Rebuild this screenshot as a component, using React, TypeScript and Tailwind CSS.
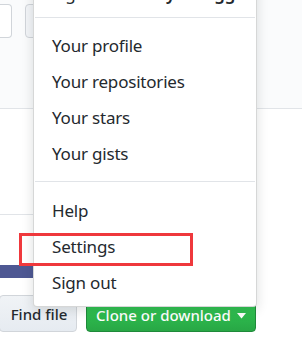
import React from "react";

const font = { fontFamily: '"Noto Sans", "Open Sans", sans-serif' };

function Item({ label }: { label: string }) {
  return (
    <div className="h-[36px] leading-[36px] pl-[18px] text-[17px] tracking-[-0.2px] text-[#24292e]">{label}</div>
  );
}

export default function App() {
  return (
    <div className="relative w-[302px] h-[337px] overflow-hidden bg-white" style={font}>
      {/* page background */}
      <div className="flex flex-col h-full">
        <div className="h-[109px] shrink-0 bg-[#fafbfc] border-b border-[#e1e4e8] pt-[4px] flex items-start">
          <div className="w-[12px] h-[34px] bg-white border border-l-0 border-[#d1d5da] rounded-r-[4px]" />
          <div className="ml-[13px] w-[60px] h-[34px] bg-[#f3f5f8] border border-[#d1d5da] rounded-[4px]" />
        </div>
        <div className="h-[106px] shrink-0 border-b border-[#e1e4e8] w-[100px]" />
        <div className="h-[50px] shrink-0" />
        <div className="h-[13px] shrink-0 w-[100px] bg-[#4e5893]" />
        <div className="h-[17px] shrink-0" />
        <div className="flex items-start gap-[9px]">
          <div className="w-[78px] h-[37px] ml-[-1px] pt-[2px] flex items-center justify-center rounded-[4px] border border-[#d1d5da] bg-gradient-to-b from-[#f0f3f6] to-[#e6ebf1] text-[15px] font-medium text-[#24292e]">
            <span className="pl-[2px]">Find file</span>
          </div>
          <div className="w-[170px] h-[37px] pt-[3px] flex items-center justify-center gap-[6px] rounded-[4px] border border-[#1f8a3a] bg-gradient-to-b from-[#34d058] to-[#28a745] text-[15px] font-medium text-white">
            <span>Clone or download</span>
            <svg width="9" height="6" viewBox="0 0 9 6" className="mt-[1px]">
              <path d="M0 0 L9 0 L4.5 5.5 Z" fill="white" />
            </svg>
          </div>
        </div>
      </div>

      {/* dropdown menu */}
      <div className="absolute left-[33px] top-[-25px] w-[224px] bg-white border border-[rgba(27,31,35,0.18)] rounded-b-[4px] shadow-[0_3px_12px_rgba(27,31,35,0.15)]">
        <div className="h-[41px] leading-[36px] pl-[18px] text-[17px] tracking-[-0.2px] text-[#24292e] whitespace-nowrap">
          Signed in as <span className="font-semibold">myzhangg</span>
        </div>
        <div className="h-px bg-[#e1e4e8] mx-[1px]" />
        <div className="pt-[10px] pb-[9px]">
          <Item label="Your profile" />
          <Item label="Your repositories" />
          <Item label="Your stars" />
          <Item label="Your gists" />
        </div>
        <div className="h-px bg-[#e1e4e8] mx-[1px]" />
        <div className="pt-[11px] pb-[5px]">
          <Item label="Help" />
          <Item label="Settings" />
          <Item label="Sign out" />
        </div>
      </div>

      {/* annotation */}
      <div className="absolute left-[19px] top-[233px] w-[174px] h-[33px] border-[3px] border-[#ef383c]" />
    </div>
  );
}
